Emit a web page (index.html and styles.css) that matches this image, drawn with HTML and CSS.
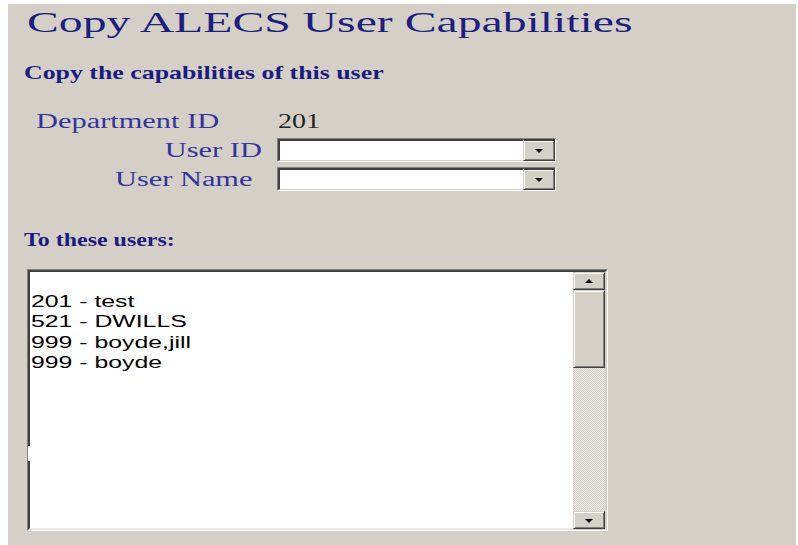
FILE: index.html
```html
<!DOCTYPE html>
<html>
<head>
<meta charset="utf-8">
<title>Copy ALECS User Capabilities</title>
<link rel="stylesheet" href="styles.css">
</head>
<body>
<div class="page">
  <h1 class="title"><span class="wide">Copy ALECS User Capabilities</span></h1>
  <h2 class="section first"><span class="wide">Copy the capabilities of this user</span></h2>

  <div class="form">
    <div class="row dept">
      <span class="label"><span class="wide">Department ID</span></span>
      <span class="value"><span class="wide">201</span></span>
    </div>
    <div class="row">
      <span class="label right"><span class="wide">User ID</span></span>
      <div class="combo"><div class="combo-field"></div><div class="btn"><span class="arrow down"></span></div></div>
    </div>
    <div class="row">
      <span class="label right name"><span class="wide">User Name</span></span>
      <div class="combo"><div class="combo-field"></div><div class="btn"><span class="arrow down"></span></div></div>
    </div>
  </div>

  <h2 class="section users"><span class="wide">To these users:</span></h2>

  <div class="listbox">
    <div class="items">
      <div class="item">&nbsp;</div>
      <div class="item"><span class="wide">201 - test</span></div>
      <div class="item"><span class="wide">521 - DWILLS</span></div>
      <div class="item"><span class="wide">999 - boyde,jill</span></div>
      <div class="item"><span class="wide">999 - boyde</span></div>
    </div>
    <div class="scrollbar">
      <div class="btn sbtn"><span class="arrow up"></span></div>
      <div class="thumb"></div>
      <div class="track"></div>
      <div class="btn sbtn"><span class="arrow down"></span></div>
    </div>
  </div>
</div>
</body>
</html>
```

FILE: styles.css
```css
html, body {
  margin: 0;
  padding: 0;
  background: #ffffff;
  height: 100%;
}

.page {
  margin: 4px 2px 0 8px;
  height: 541px;
  background: #d4d0c8;
  box-sizing: border-box;
  padding: 1px 0 0 19px;
  overflow: hidden;
}

.wide {
  display: inline-block;
  white-space: nowrap;
  transform-origin: 0 50%;
  transform: scaleX(var(--sx, 1.5));
}

.title {
  margin: 0;
  font-family: "Liberation Serif", serif;
  font-weight: normal;
  font-size: 30px;
  line-height: 34px;
  color: #1e1e7e;
  --sx: 1.59;
}

.section {
  margin: 0 0 0 -3px;
  font-family: "Liberation Serif", serif;
  font-weight: bold;
  font-size: 19px;
  line-height: 22px;
  color: #1c1c80;
}

.section.first {
  margin-top: 23px;
  --sx: 1.36;
}

.section.users {
  margin-top: 38px;
  --sx: 1.26;
}

.form {
  margin-top: 25px;
  display: flex;
  flex-direction: column;
  gap: 5px;
}

.row {
  display: flex;
  align-items: center;
  height: 24px;
}

.label {
  font-family: "Liberation Serif", serif;
  font-size: 20px;
  color: #34349a;
  --sx: 1.52;
}

.label.right {
  width: 235px;
  margin-right: 15px;
  text-align: right;
}

.label.right .wide {
  transform-origin: 100% 50%;
}

.label.right.name {
  width: 226px;
  margin-right: 24px;
}

.dept .label {
  margin-left: 9px;
  width: 242px;
}

.value {
  font-family: "Liberation Serif", serif;
  font-size: 20px;
  color: #222;
  --sx: 1.4;
}

.combo {
  width: 279px;
  height: 24px;
  box-sizing: border-box;
  display: flex;
  border-top: 1px solid #808080;
  border-left: 1px solid #808080;
  border-right: 1px solid #ffffff;
  border-bottom: 1px solid #ffffff;
}

.combo-field {
  flex: 1;
  background: #fff;
  border-top: 2px solid #404040;
  border-left: 2px solid #404040;
  border-bottom: 1px solid #d4d0c8;
}

.btn {
  background: #d4d0c8;
  box-sizing: border-box;
  display: flex;
  align-items: center;
  justify-content: center;
  border-top: 1px solid #d4d0c8;
  border-left: 1px solid #d4d0c8;
  border-right: 1px solid #404040;
  border-bottom: 1px solid #404040;
  box-shadow: inset 1px 1px 0 #ffffff, inset -1px -1px 0 #808080;
}

.combo .btn {
  width: 32px;
  border-top: 2px solid #404040;
}

.arrow {
  width: 0;
  height: 0;
  border-left: 4px solid transparent;
  border-right: 4px solid transparent;
}

.arrow.down { border-top: 4px solid #000; margin-top: 1px; }
.arrow.up { border-bottom: 4px solid #000; }

.listbox {
  margin: 18px 0 0 0;
  width: 581px;
  height: 262px;
  box-sizing: border-box;
  display: flex;
  background: #fff;
  border-top: 1px solid #808080;
  border-left: 1px solid #808080;
  border-right: 1px solid #ffffff;
  border-bottom: 1px solid #ffffff;
}

.items {
  flex: 1;
  border-top: 2px solid #404040;
  border-left: 2px solid #404040;
  border-bottom: 2px solid #ece9e4;
  font-family: "Liberation Sans", Arial, sans-serif;
  font-size: 16px;
  line-height: 20.6px;
  color: #000;
  position: relative;
  --sx: 1.55;
}

/* break in the left bevel of the list */
.items::before {
  content: "";
  position: absolute;
  left: -2px;
  top: 174px;
  width: 2px;
  height: 15px;
  background: #fff;
}

.item {
  padding-left: 1px;
  white-space: nowrap;
}

.item:first-child {
  margin-top: -1px;
}

.scrollbar {
  width: 34px;
  display: flex;
  flex-direction: column;
  border-top: 2px solid #404040;
  border-right: 2px solid #d4d0c8;
  border-bottom: 1px solid #d4d0c8;
  box-sizing: border-box;
}

.sbtn {
  height: 18px;
  width: 32px;
}

.thumb {
  height: 78px;
  background: #d4d0c8;
  box-sizing: border-box;
  border-top: 1px solid #d4d0c8;
  border-left: 1px solid #d4d0c8;
  border-right: 1px solid #404040;
  border-bottom: 1px solid #404040;
  box-shadow: inset 1px 1px 0 #ffffff, inset -1px -1px 0 #808080;
}

.track {
  flex: 1;
  background-color: #ece9e4;
  background-image:
    linear-gradient(45deg, #d4d0c8 25%, transparent 25%, transparent 75%, #d4d0c8 75%),
    linear-gradient(45deg, #d4d0c8 25%, transparent 25%, transparent 75%, #d4d0c8 75%);
  background-size: 2px 2px;
  background-position: 0 0, 1px 1px;
}
```
